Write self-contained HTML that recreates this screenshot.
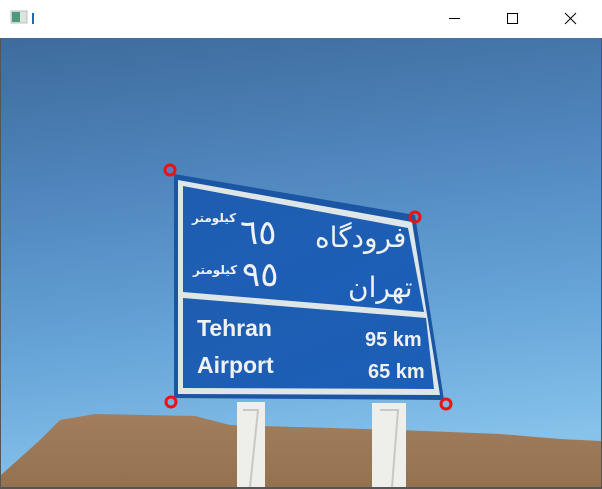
<!DOCTYPE html>
<html><head><meta charset="utf-8"><style>
html,body{margin:0;padding:0;width:602px;height:489px;overflow:hidden;background:#fff}
svg{display:block}
</style></head><body>
<svg width="602" height="489" viewBox="0 0 602 489" xmlns="http://www.w3.org/2000/svg">
<defs>
<linearGradient id="sky" x1="0" y1="0" x2="0.15" y2="1">
<stop offset="0" stop-color="#3e6b9c"/>
<stop offset="0.35" stop-color="#4f86bd"/>
<stop offset="0.7" stop-color="#67a4d8"/>
<stop offset="1" stop-color="#86c2ea"/>
</linearGradient>
<linearGradient id="hill" x1="0" y1="0" x2="0" y2="1">
<stop offset="0" stop-color="#a27e5e"/>
<stop offset="1" stop-color="#94714f"/>
</linearGradient>
<linearGradient id="sign" x1="0" y1="0" x2="1" y2="1">
<stop offset="0" stop-color="#1f5db0"/>
<stop offset="1" stop-color="#1c5fb8"/>
</linearGradient>
</defs>
<rect x="0" y="0" width="602" height="38" fill="#fff"/>
<rect x="11" y="11" width="16" height="12" fill="#dde3e0" stroke="#b8c0c0"/>
<rect x="12" y="12" width="8" height="10" fill="#4f9a7a"/>
<rect x="32" y="13" width="2" height="11" fill="#1a6bb5"/>
<line x1="449" y1="18.5" x2="460" y2="18.5" stroke="#000" stroke-width="1"/>
<rect x="507.5" y="13.5" width="10" height="10" fill="none" stroke="#000"/>
<path d="M565 13 L576 24 M576 13 L565 24" stroke="#000" stroke-width="1"/>
<rect x="1" y="38" width="600" height="449" fill="url(#sky)"/>
<path d="M1 475 L40 440 L60 420 L95 414 L195 416 L230 425 L400 430 L500 434 L560 439 L601 441 L601 487 L1 487 Z" fill="url(#hill)"/>
<rect x="237" y="402" width="28" height="85" fill="#eeeeea"/>
<path d="M243 410 L258 410 L250 487" fill="none" stroke="#c8c8c4" stroke-width="2"/>
<rect x="372" y="403" width="34" height="84" fill="#eeeeea"/>
<path d="M380 410 L398 410 L392 487" fill="none" stroke="#c8c8c4" stroke-width="2"/>
<polygon points="174,174 415,215 444,400 174,398" fill="#1b56a4"/>
<polygon points="178,180 412,222 440,395 178,394" fill="#dfe6e8"/>
<polygon points="183,186 408,228 424,312 183,292" fill="url(#sign)"/>
<polygon points="183,298 426,318 434,389 183,388" fill="url(#sign)"/>
<g font-family="'Liberation Sans','DejaVu Sans',sans-serif" fill="#f0f2f2" font-weight="bold">
<text x="197" y="336" font-size="23">Tehran</text>
<text x="197" y="373" font-size="23">Airport</text>
<text x="365" y="346" font-size="20">95 km</text>
<text x="368" y="378" font-size="20">65 km</text>
</g>
<g font-family="'DejaVu Sans',sans-serif" fill="#f0f2f2">
<text x="315" y="247" font-size="28">فرودگاه</text>
<text x="348" y="297" font-size="28">تهران</text>
<text x="240" y="244" font-size="34">٦٥</text>
<text x="242" y="286" font-size="34">٩٥</text>
<text x="192" y="222" font-size="12" font-weight="bold">کیلومتر</text>
<text x="193" y="274" font-size="12" font-weight="bold">کیلومتر</text>
</g>
<g fill="none" stroke="#ee1111" stroke-width="3">
<circle cx="170" cy="170" r="5"/>
<circle cx="415" cy="217" r="5"/>
<circle cx="171" cy="402" r="5"/>
<circle cx="446" cy="404" r="5"/>
</g>
<rect x="0" y="487" width="602" height="2" fill="#555"/>
<rect x="0" y="38" width="1" height="451" fill="#555"/>
<rect x="601" y="38" width="1" height="451" fill="#555"/>
</svg>
</body></html>
